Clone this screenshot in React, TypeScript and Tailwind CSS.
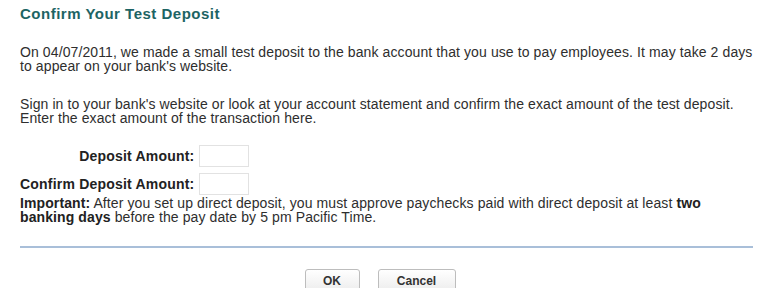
export default function App() {
  return (
    <div
      className="w-[759px] h-[288px] overflow-hidden bg-white pl-[20px] pr-[3px] pt-[5px] text-[14px] leading-[14px] tracking-[0.1px] text-[#2e2e2e]"
      style={{ fontFamily: '"Liberation Sans", Arial, sans-serif' }}
    >
      <h1 className="text-[15px] leading-[18px] font-bold tracking-[0.5px] text-[#1d6464]">Confirm Your Test Deposit</h1>

      <p className="mt-[22px]">
        On 04/07/2011, we made a small test deposit to the bank account that you use to pay employees. It may take 2 days
        to appear on your bank&apos;s website.
      </p>

      <p className="mt-[24px]">
        Sign in to your bank&apos;s website or look at your account statement and confirm the exact amount of the test deposit.
        Enter the exact amount of the transaction here.
      </p>

      <div className="mt-[20px] grid grid-cols-[auto_auto] gap-x-[5px] gap-y-[6px] items-center w-max">
        <label className="text-right font-bold tracking-[0.2px] text-[#222]">Deposit Amount:</label>
        <input className="w-[50px] h-[22px] border border-[#e2e2e2] bg-white" />
        <label className="text-right font-bold tracking-[0.2px] text-[#222]">Confirm Deposit Amount:</label>
        <input className="w-[50px] h-[22px] border border-[#e2e2e2] bg-white" />
      </div>

      <p className="mt-[1px]">
        <b className="text-[#222]">Important:</b> After you set up direct deposit, you must approve paychecks paid with direct
        deposit at least <b className="text-[#222]">two banking days</b> before the pay date by 5 pm Pacific Time.
      </p>

      <hr className="mt-[22px] border-0 h-[2px] bg-[#a9bfd9] w-[733px]" />

      <div className="mt-[21px] flex justify-center gap-[18px] pr-[16px]">
        <button className="w-[55px] h-[24px] rounded-[3px] border border-[#bdbdbd] bg-gradient-to-b from-white to-[#ececec] font-bold text-[12px] tracking-normal text-[#333]">
          OK
        </button>
        <button className="w-[78px] h-[24px] rounded-[3px] border border-[#bdbdbd] bg-gradient-to-b from-white to-[#ececec] font-bold text-[12px] tracking-normal text-[#333]">
          Cancel
        </button>
      </div>
    </div>
  );
}
